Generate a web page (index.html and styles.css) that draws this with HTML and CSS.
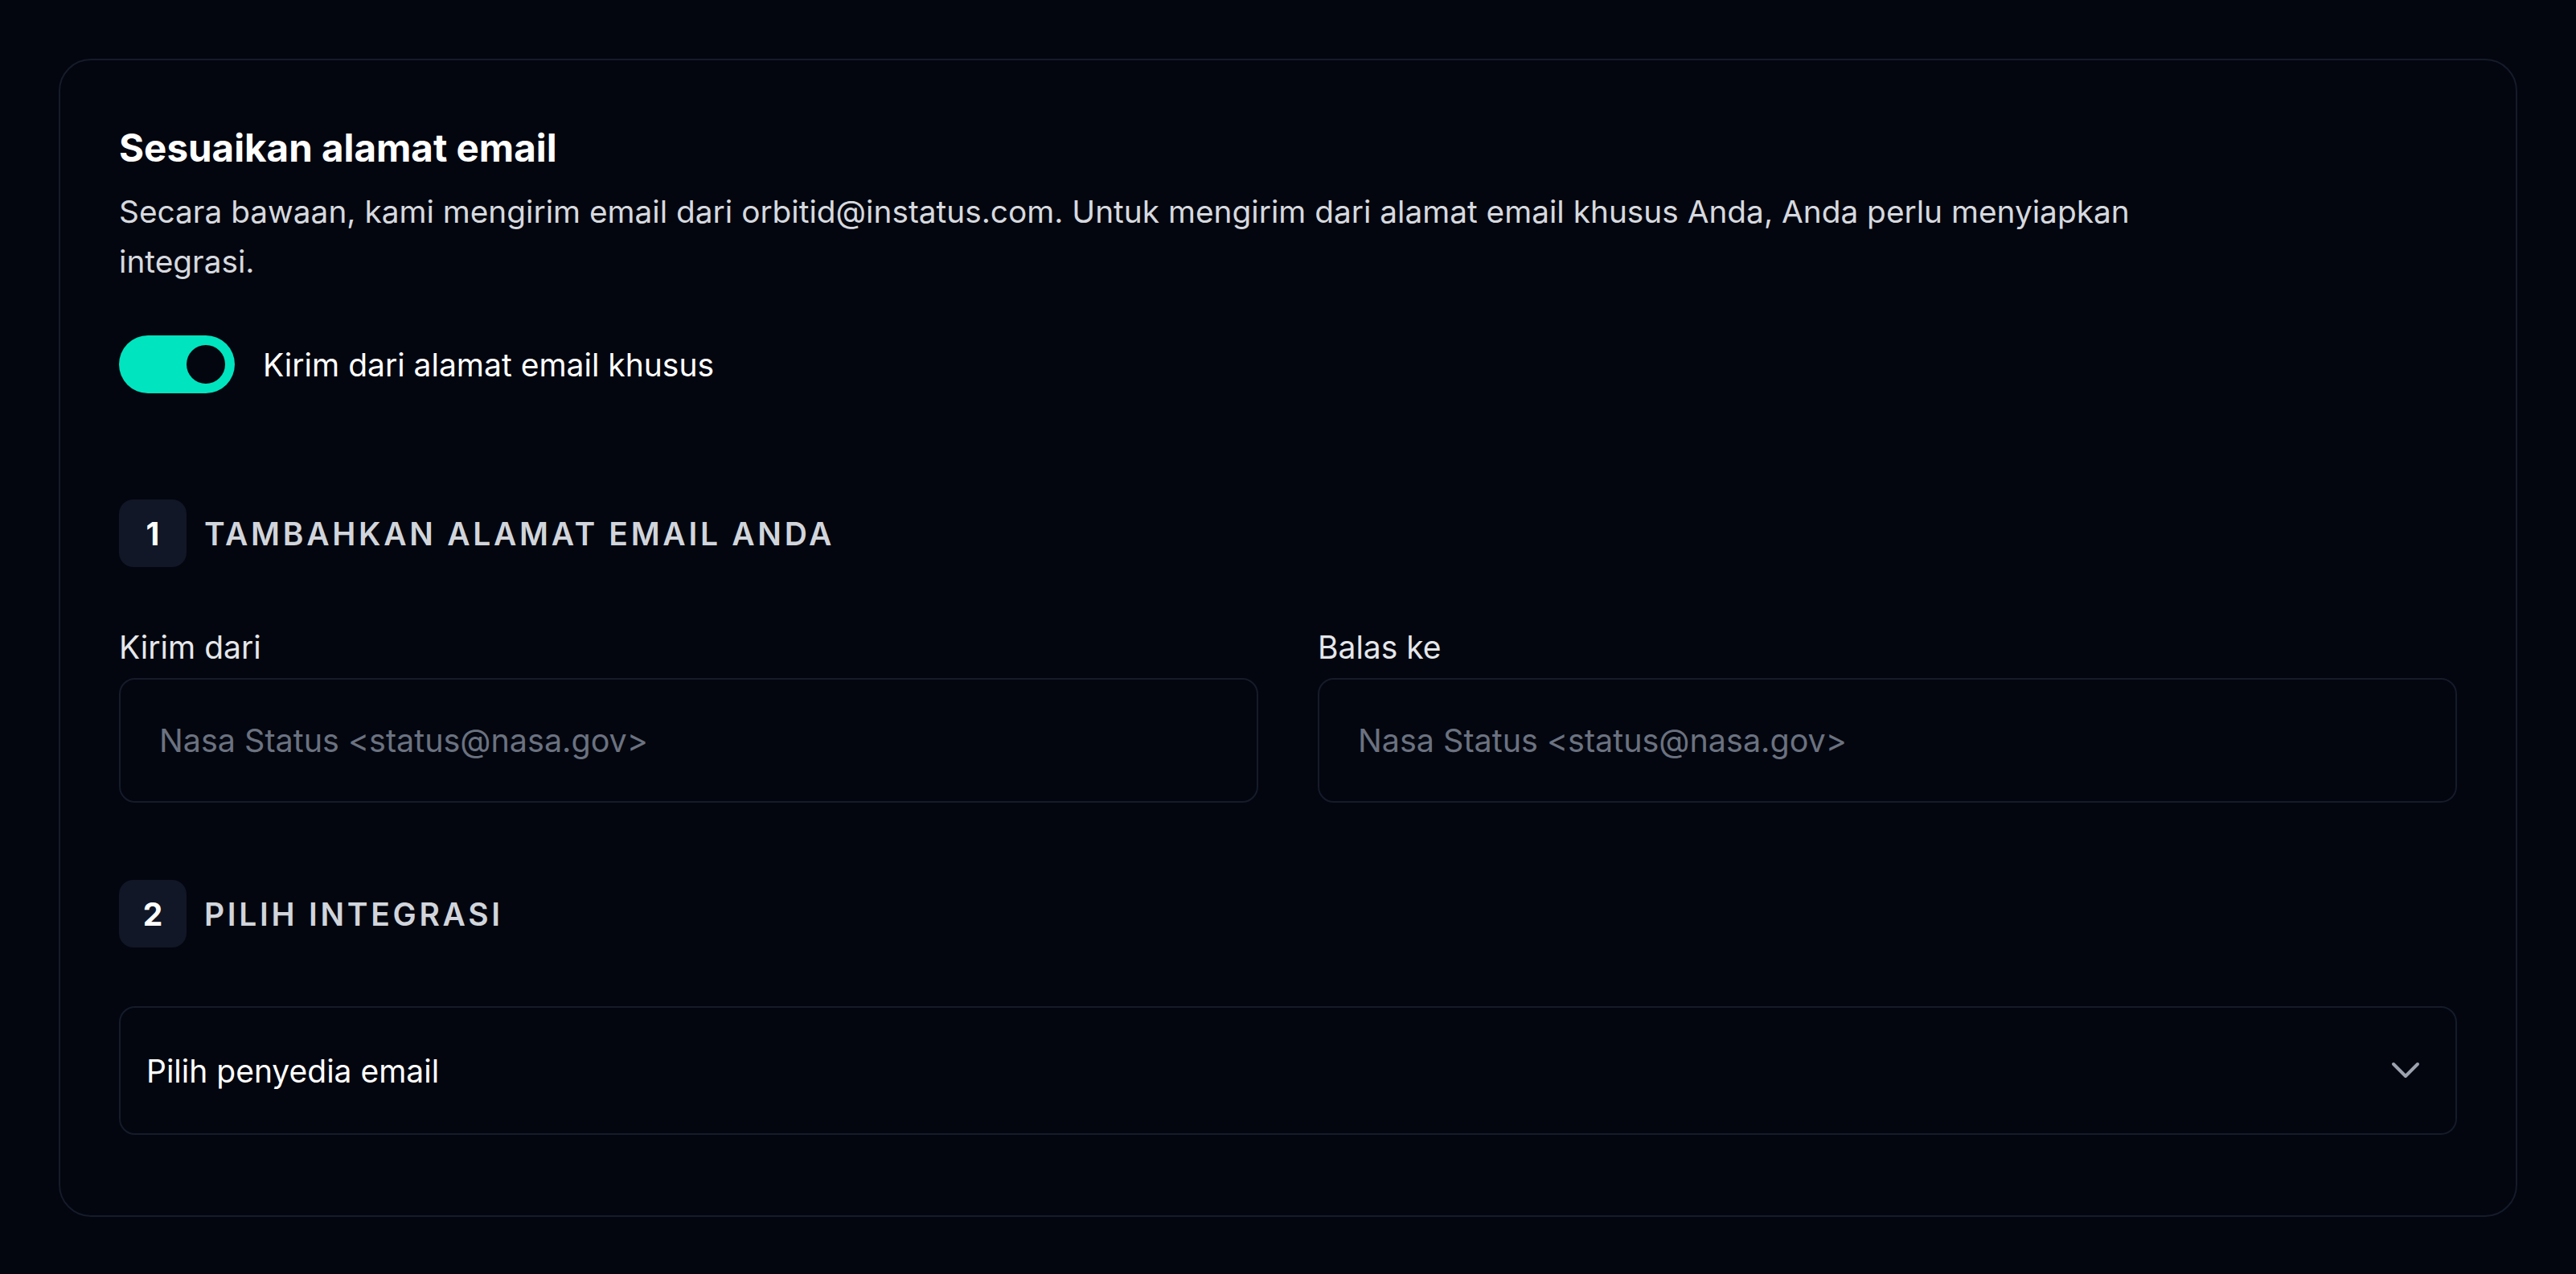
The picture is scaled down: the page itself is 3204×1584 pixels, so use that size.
FILE: index.html
```html
<!DOCTYPE html>
<html lang="id">
<head>
    <meta charset="UTF-8">
    <meta name="viewport" content="width=device-width, initial-scale=1.0">
    <title>Sesuaikan alamat email</title>
    <link rel="stylesheet" href="styles.css">
</head>
<body>
    <div class="page">
        <section class="card">
            <h2 class="card-title">Sesuaikan alamat email</h2>
            <p class="card-desc">
                Secara bawaan, kami mengirim email dari orbitid@instatus.com. Untuk mengirim dari alamat email khusus Anda, Anda perlu menyiapkan integrasi.
            </p>

            <label class="switch-row">
                <span class="switch"><span class="knob"></span></span>
                <span class="switch-label">Kirim dari alamat email khusus</span>
            </label>

            <div class="step">
                <span class="step-num">1</span>
                <h3 class="step-title">Tambahkan alamat email Anda</h3>
            </div>

            <div class="fields">
                <div class="field">
                    <label for="from">Kirim dari</label>
                    <input type="text" id="from" placeholder="Nasa Status <status@nasa.gov>">
                </div>
                <div class="field">
                    <label for="reply">Balas ke</label>
                    <input type="text" id="reply" placeholder="Nasa Status <status@nasa.gov>">
                </div>
            </div>

            <div class="step step-two">
                <span class="step-num">2</span>
                <h3 class="step-title">Pilih integrasi</h3>
            </div>

            <div class="select">
                <span>Pilih penyedia email</span>
                <svg width="36" height="22" viewBox="0 0 36 22">
                    <polyline points="3,3 18,18 33,3" fill="none" stroke="#9ca3af" stroke-width="4" stroke-linecap="round" stroke-linejoin="round"/>
                </svg>
            </div>
        </section>
    </div>
</body>
</html>
```

FILE: styles.css
```css
body{
    margin: 0;
    background-color: #03060f;
    font-family: Inter, "Noto Sans", sans-serif;
    color: #f3f4f6;
}

.page{
    padding: 73px;
}

.card{
    border: 2px solid #151b2a;
    border-radius: 40px;
    padding: 73px 73px 100px 73px;
}

.card-title{
    margin: 0;
    font-size: 47.5px;
    line-height: 72px;
    font-weight: 700;
    color: #ffffff;
}

.card-desc{
    margin: 12px 0 0 0;
    max-width: 2620px;
    font-size: 38.8px;
    line-height: 62px;
    color: #d6d9df;
}

.switch-row{
    display: flex;
    align-items: center;
    gap: 35px;
    margin-top: 61px;
    font-size: 39px;
    color: #ffffff;
}

.switch{
    display: flex;
    justify-content: flex-end;
    align-items: center;
    width: 144px;
    height: 72px;
    padding: 0 12px;
    box-sizing: border-box;
    border-radius: 36px;
    background-color: #00e4bf;
}

.knob{
    width: 48px;
    height: 48px;
    border-radius: 50%;
    background-color: #03060f;
}

.step{
    display: flex;
    align-items: center;
    gap: 22px;
    margin-top: 132px;
}

.step-two{
    margin-top: 96px;
}

.step-num{
    display: flex;
    justify-content: center;
    align-items: center;
    width: 84px;
    height: 84px;
    border-radius: 18px;
    background-color: #111726;
    font-size: 39px;
    font-weight: 700;
    color: #ffffff;
}

.step-title{
    margin: 0;
    font-size: 39px;
    font-weight: 600;
    letter-spacing: 0.095em;
    text-transform: uppercase;
    color: #d1d5db;
}

.fields{
    display: grid;
    grid-template-columns: 1fr 1fr;
    gap: 74px;
    margin-top: 72px;
}

.field > label{
    display: block;
    font-size: 39px;
    line-height: 56px;
    margin-bottom: 10px;
    color: #e5e7eb;
}

.field > input{
    display: block;
    width: 100%;
    height: 155px;
    box-sizing: border-box;
    padding: 0 48px;
    border: 2px solid #151b2a;
    border-radius: 20px;
    background-color: #03060f;
    font-family: Inter, "Noto Sans", sans-serif;
    font-size: 39.5px;
    color: #f3f4f6;
    outline: none;
}

.field > input::placeholder{
    color: #6b7280;
}

.select{
    display: flex;
    justify-content: space-between;
    align-items: center;
    height: 160px;
    box-sizing: border-box;
    margin-top: 73px;
    padding: 0 44px 0 32px;
    border: 2px solid #151b2a;
    border-radius: 20px;
    font-size: 39px;
    color: #ffffff;
}
```
